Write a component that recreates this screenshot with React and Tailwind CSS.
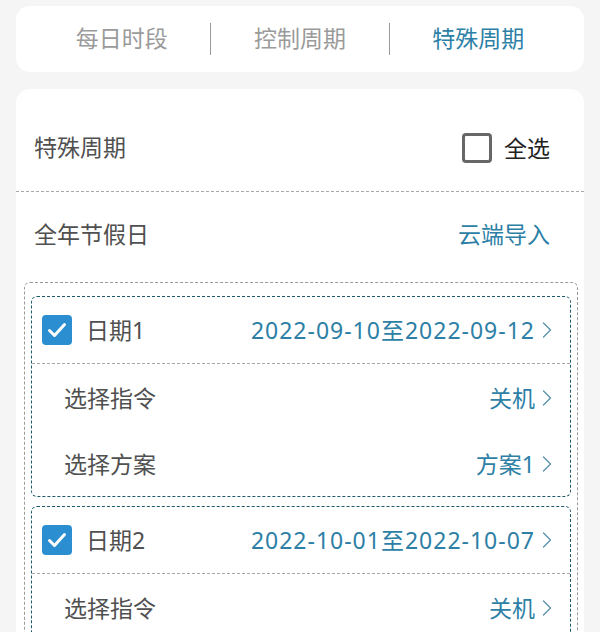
import React from "react";

const BLUE = "text-[#2d7fa6]";

function Chevron() {
  return (
    <svg width="12" height="18" viewBox="0 0 12 18" className="ml-[6px] shrink-0" fill="none">
      <path d="M2.5 2 L9.5 9 L2.5 16" stroke="#5a8fa8" strokeWidth="1.3" strokeLinecap="round" strokeLinejoin="round" />
    </svg>
  );
}

function Checked() {
  return (
    <div className="w-[30px] h-[30px] rounded-[4px] bg-[#2b8ed0] flex items-center justify-center shrink-0">
      <svg width="22" height="22" viewBox="0 0 22 22" fill="none">
        <path d="M3.5 11.5 L8.5 16.5 L18.5 5.5" stroke="white" strokeWidth="3" strokeLinecap="round" strokeLinejoin="round" />
      </svg>
    </div>
  );
}

function DateBlock({ name, range, cmd, plan }) {
  return (
    <div className="border border-dashed border-[#1f5a6b] rounded-[6px]">
      <div className="h-[66px] flex items-center pl-[10px] pr-[17px]">
        <Checked />
        <span className="ml-[14px] text-[#505050]">{name}</span>
        <div className="ml-auto flex items-center">
          <span className={`${BLUE} tracking-[1px]`}>{range}</span>
          <Chevron />
        </div>
      </div>
      <div className="border-t border-dashed border-[#a8a8a8]" />
      <div className="h-[66px] flex items-center justify-between pl-[32px] pr-[17px] pt-[2px]">
        <span className="text-[#505050]">选择指令</span>
        <div className="flex items-center">
          <span className={BLUE}>{cmd}</span>
          <Chevron />
        </div>
      </div>
      {plan && (
        <div className="h-[66px] flex items-center justify-between pl-[32px] pr-[17px] pt-[2px]">
          <span className="text-[#505050]">选择方案</span>
          <div className="flex items-center">
            <span className={BLUE}>{plan}</span>
            <Chevron />
          </div>
        </div>
      )}
    </div>
  );
}

export default function App() {
  return (
    <div className="h-[632px] overflow-hidden bg-[#f5f5f5] px-4 pt-[6px] text-[23px] leading-none font-['Noto_Sans','Noto_Sans_CJK_SC',sans-serif]">
      <div className="h-[66px] bg-white rounded-[14px] flex items-center px-[17px]">
        <div className="flex-1 text-center text-[#9a9a9a] pb-[2px]">每日时段</div>
        <div className="w-px h-[32px] bg-[#9a9a9a]" />
        <div className="flex-1 text-center text-[#9a9a9a] pb-[2px]">控制周期</div>
        <div className="w-px h-[32px] bg-[#9a9a9a]" />
        <div className={`flex-1 text-center ${BLUE} pb-[2px]`}>特殊周期</div>
      </div>

      <div className="mt-[17px] bg-white rounded-[14px] pt-[18px] pb-4">
        <div className="h-[84px] flex items-center justify-between pl-[18px] pr-[34px] pb-[4px]">
          <span className="text-[#505050]">特殊周期</span>
          <div className="flex items-center pt-[2px]">
            <div className="w-[30px] h-[30px] rounded-[4px] border-[3px] border-[#676767]" />
            <span className="ml-[12px] text-[#222]">全选</span>
          </div>
        </div>
        <div className="border-t border-dashed border-[#a8a8a8]" />
        <div className="h-[90px] flex items-center justify-between pl-[18px] pr-[34px] pb-[5px]">
          <span className="text-[#505050]">全年节假日</span>
          <span className={BLUE}>云端导入</span>
        </div>
        <div className="ml-2 mr-[6px] border border-dashed border-[#9a9a9a] rounded-[6px] px-[6px] pt-[13px] pb-[10px] flex flex-col gap-[9px]">
          <DateBlock name="日期1" range="2022-09-10至2022-09-12" cmd="关机" plan="方案1" />
          <DateBlock name="日期2" range="2022-10-01至2022-10-07" cmd="关机" />
        </div>
      </div>
    </div>
  );
}
